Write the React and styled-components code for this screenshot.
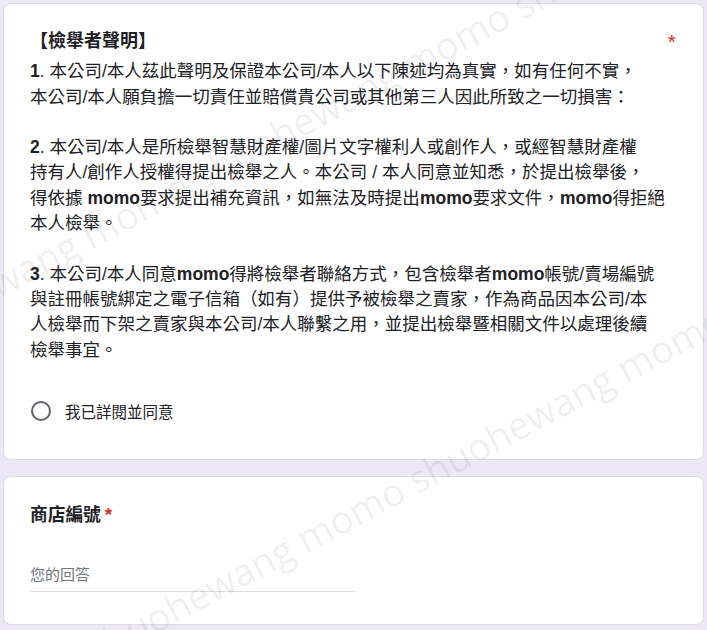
import { createGlobalStyle } from "styled-components";
import styled from "styled-components";

const GlobalStyle = createGlobalStyle`
  html, body {
    margin: 0;
    padding: 0;
    background: #ece8f6;
  }
  body {
    font-family: "Liberation Sans", "Noto Sans CJK TC", sans-serif;
    color: #202124;
  }
`;

const Page = styled.div`
  position: relative;
  display: flex;
  flex-direction: column;
  gap: 16px;
  padding: 3px 3px 5px 3px;
  overflow: hidden;
`;

const Card = styled.div`
  background: #fff;
  border: 1px solid #dadce0;
  border-radius: 8px;
  padding: ${(p) => p.$pad};
  box-sizing: border-box;
  height: ${(p) => p.$h}px;
`;

const Header = styled.div`
  display: flex;
  justify-content: space-between;
  align-items: flex-start;
`;

const Statement = styled.div`
  min-width: 0;
  font-size: 17.5px;
  line-height: 25.3px;
  color: #202124;
`;

const Heading = styled.div`
  font-size: 18px;
  font-weight: 700;
  margin-bottom: 5px;
`;

const Line = styled.span`
  display: block;
  white-space: nowrap;
  min-height: 25.3px;
`;

const B = styled.b`
  font-weight: 700;
`;

const Star = styled.span`
  flex: none;
  color: #d93025;
  font-size: ${(p) => (p.$inline ? "19px" : "21px")};
  line-height: 25.3px;
  padding-left: ${(p) => (p.$inline ? "4px" : "0")};
  padding-right: ${(p) => (p.$inline ? "0" : "1px")};
`;

const Choice = styled.label`
  display: flex;
  align-items: center;
  gap: 14px;
  margin-top: 36px;
  margin-left: 1px;
  height: 24px;
  font-size: 15.5px;
  color: #202124;
`;

const Radio = styled.span`
  width: 20px;
  height: 20px;
  box-sizing: border-box;
  border: 2px solid #5f6368;
  border-radius: 50%;
  flex: none;
`;

const Title = styled.div`
  font-size: 17.7px;
  line-height: 25.5px;
  font-weight: 700;
  color: #202124;
`;

const Answer = styled.div`
  margin-top: 31px;
  width: 325px;
  padding: 5px 0 6px;
  border-bottom: 1px solid #dadce0;
  font-size: 15px;
  line-height: 20px;
  color: #70757a;
`;

const Watermark = styled.div`
  position: absolute;
  inset: 0;
  overflow: hidden;
  pointer-events: none;
`;

const MarkLine = styled.div`
  position: absolute;
  left: ${(p) => p.$x}px;
  top: ${(p) => p.$y}px;
  transform-origin: 0 0;
  transform: rotate(-28deg);
  white-space: nowrap;
  font-family: "Open Sans", sans-serif;
  font-size: 38px;
  line-height: 1;
  color: rgba(0, 0, 0, 0.07);
`;

const markText = "shuohewang momo shuohewang momo shuohewang momo";

export default function App() {
  return (
    <>
      <GlobalStyle />
      <Page>
        <Card $h={457} $pad="25px 26px 0 26px">
          <Header>
            <Statement>
              <Heading>【檢舉者聲明】</Heading>
              <Line><B>1</B>. 本公司/本人茲此聲明及保證本公司/本人以下陳述均為真實，如有任何不實，</Line>
              <Line>本公司/本人願負擔一切責任並賠償貴公司或其他第三人因此所致之一切損害：</Line>
              <Line />
              <Line><B>2</B>. 本公司/本人是所檢舉智慧財產權/圖片文字權利人或創作人，或經智慧財產權</Line>
              <Line>持有人/創作人授權得提出檢舉之人。本公司 / 本人同意並知悉，於提出檢舉後，</Line>
              <Line>得依據 <B>momo</B>要求提出補充資訊，如無法及時提出<B>momo</B>要求文件，<B>momo</B>得拒絕</Line>
              <Line>本人檢舉。</Line>
              <Line />
              <Line><B>3</B>. 本公司/本人同意<B>momo</B>得將檢舉者聯絡方式，包含檢舉者<B>momo</B>帳號/賣場編號</Line>
              <Line>與註冊帳號綁定之電子信箱（如有）提供予被檢舉之賣家，作為商品因本公司/本</Line>
              <Line>人檢舉而下架之賣家與本公司/本人聯繫之用，並提出檢舉暨相關文件以處理後續</Line>
              <Line>檢舉事宜。</Line>
            </Statement>
            <Star>*</Star>
          </Header>
          <Choice>
            <Radio />
            我已詳閱並同意
          </Choice>
        </Card>

        <Card $h={149} $pad="25px 26px 0 26px">
          <Title>
            商店編號<Star $inline>*</Star>
          </Title>
          <Answer>您的回答</Answer>
        </Card>

        <Watermark>
          <MarkLine $x={-134} $y={331}>{markText}</MarkLine>
          <MarkLine $x={81} $y={635}>{markText}</MarkLine>
        </Watermark>
      </Page>
    </>
  );
}
